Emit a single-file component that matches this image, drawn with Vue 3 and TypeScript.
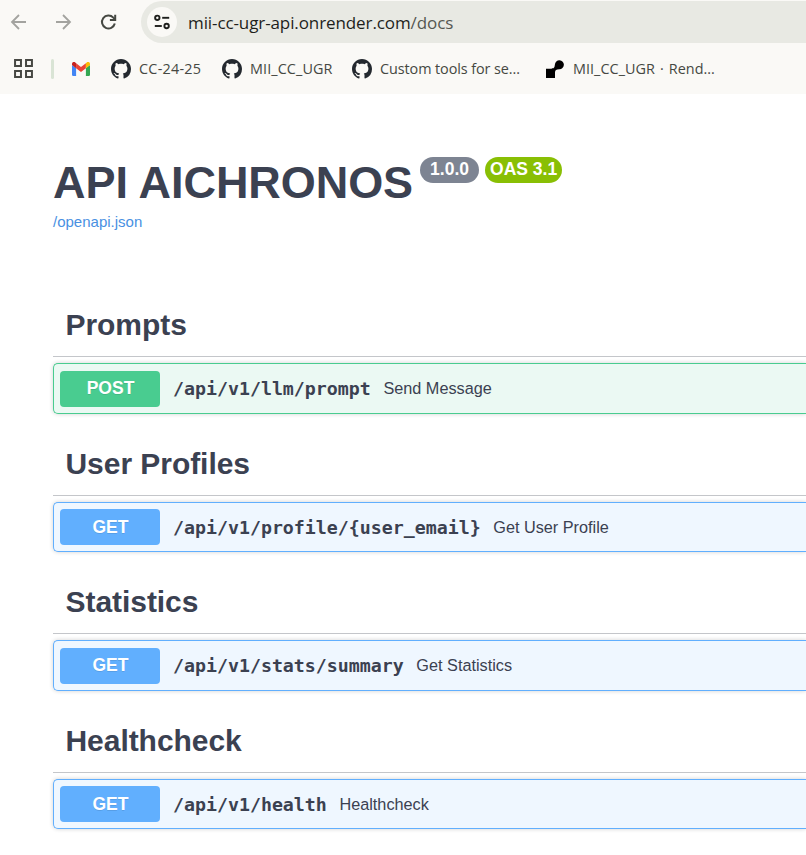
<script setup lang="ts">
interface Operation {
  tag: string
  method: 'POST' | 'GET'
  path: string
  summary: string
}

interface Bookmark {
  label: string
  icon: 'github' | 'render'
  key: string
}

const bookmarks: Bookmark[] = [
  { label: 'CC-24-25', icon: 'github', key: 'cc' },
  { label: 'MII_CC_UGR', icon: 'github', key: 'mii' },
  { label: 'Custom tools for se...', icon: 'github', key: 'tools' },
  { label: 'MII_CC_UGR · Rend...', icon: 'render', key: 'rend' },
]

const operations: Operation[] = [
  { tag: 'Prompts', method: 'POST', path: '/api/v1/llm/prompt', summary: 'Send Message' },
  { tag: 'User Profiles', method: 'GET', path: '/api/v1/profile/{user_email}', summary: 'Get User Profile' },
  { tag: 'Statistics', method: 'GET', path: '/api/v1/stats/summary', summary: 'Get Statistics' },
  { tag: 'Healthcheck', method: 'GET', path: '/api/v1/health', summary: 'Healthcheck' },
]
</script>

<template>
  <div class="window">
    <header class="chrome">
      <div class="toolbar">
        <nav class="nav">
          <svg class="nav-icon dim" viewBox="0 0 20 20"><path d="M17 10H3.200M10 3L3 10l7 7" /></svg>
          <svg class="nav-icon dim" viewBox="0 0 20 20"><path d="M2 10h13.800M9 3l7 7-7 7" /></svg>
          <svg class="nav-icon reload" viewBox="0 0 20 20">
            <path d="M15.800 11.500A6.500 6.500 0 1 1 14.300 5.600L16.200 7.500" />
            <path d="M16.200 2.700v5.300h-5.300" />
          </svg>
        </nav>
        <div class="address">
          <span class="site">
            <svg viewBox="0 0 18 18">
              <circle cx="4.3" cy="4.8" r="2.2" /><path d="M9.2 4.800h7" />
              <circle cx="13.6" cy="13" r="2.2" /><path d="M1.800 13h7" />
            </svg>
          </span>
          <span class="url">mii-cc-ugr-api.onrender.com<span class="url-path">/docs</span></span>
        </div>
      </div>
      <div class="bookmarks">
        <svg class="apps" viewBox="0 0 18 18">
          <path d="M1 1h5.6v5.6H1zM11.4 1H17v5.6h-5.6zM1 11.4h5.6V17H1zM11.4 11.4H17V17h-5.6z" />
        </svg>
        <span class="divider"></span>
        <svg class="gmail" viewBox="0 0 18 14">
          <path fill="#4285f4" d="M0 3l4.1 3v8H1.2A1.2 1.2 0 0 1 0 12.8z" />
          <path fill="#34a853" d="M18 3l-4.1 3v8h2.9a1.2 1.2 0 0 0 1.2-1.2z" />
          <path fill="#ea4335" d="M4.1 1.2L9 4.9l4.9-3.7v5L9 9.9 4.1 6.2z" />
          <path fill="#c5221f" d="M0 3V1.8C0 .2 1.7-.6 3 .3l1.1.9v5z" />
          <path fill="#fbbc04" d="M18 3V1.8c0-1.6-1.7-2.4-3-1.5l-1.1.9v5z" />
        </svg>
        <span v-for="b in bookmarks" :key="b.key" class="bookmark" :class="b.key">
          <svg v-if="b.icon === 'github'" class="github" viewBox="0 0 16 16">
            <path d="M8 0C3.58 0 0 3.58 0 8c0 3.54 2.29 6.53 5.47 7.59.4.07.55-.17.55-.38 0-.19-.01-.82-.01-1.49-2.01.37-2.53-.49-2.69-.94-.09-.23-.48-.94-.82-1.13-.28-.15-.68-.52-.01-.53.63-.01 1.08.58 1.23.82.72 1.21 1.87.87 2.33.66.07-.52.28-.87.51-1.07-1.78-.2-3.64-.89-3.64-3.95 0-.87.31-1.59.82-2.15-.08-.2-.36-1.02.08-2.12 0 0 .67-.21 2.2.82.64-.18 1.32-.27 2-.27s1.36.09 2 .27c1.53-1.04 2.2-.82 2.2-.82.44 1.1.16 1.92.08 2.12.51.56.82 1.27.82 2.15 0 3.07-1.87 3.75-3.65 3.95.29.25.54.73.54 1.48 0 1.07-.01 1.93-.01 2.2 0 .21.15.46.55.38A8.01 8.01 0 0 0 16 8c0-4.42-3.58-8-8-8z" />
          </svg>
          <svg v-else class="render" viewBox="0 0 18 18">
            <path d="M0 8.8h5.2C8.3 8.8 8.6 7 8.9 4.600A4.500 4.500 0 1 1 13.200 9.200C10.300 9.200 9 10 9 12.600V18H0z" />
          </svg>
          <span class="label">{{ b.label }}</span>
        </span>
      </div>
    </header>

    <main class="docs">
      <div class="info">
        <h1>API AICHRONOS</h1>
        <span class="pill version">1.0.0</span>
        <span class="pill oas">OAS 3.1</span>
      </div>
      <a class="spec">/openapi.json</a>

      <section v-for="op in operations" :key="op.tag" class="group">
        <h2>{{ op.tag }}</h2>
        <div class="operation" :class="op.method.toLowerCase()">
          <span class="method">{{ op.method }}</span>
          <code>{{ op.path }}</code>
          <span class="summary">{{ op.summary }}</span>
        </div>
      </section>
    </main>
  </div>
</template>

<style>
body {
  margin: 0;
  background: #fff;
}
</style>

<style scoped>
.window {
  height: 855px;
  overflow: hidden;
  color: #3b4151;
  font-family: "Liberation Sans", Arial, sans-serif;
}
.chrome {
  box-sizing: border-box;
  height: 94px;
  padding-top: 1px;
  background: #faf9f6;
  font-family: "Open Sans", "Segoe UI", sans-serif;
}
.toolbar {
  display: flex;
  height: 42px;
}
.nav {
  display: flex;
  align-items: center;
  gap: 25px;
  width: 132px;
  padding-left: 9px;
}
.nav-icon {
  flex: none;
  width: 20px;
  height: 20px;
  fill: none;
  stroke-width: 1.8;
}
.dim {
  stroke: #a3a39f;
}
.reload {
  stroke: #454842;
  stroke-width: 2;
}
.address {
  display: flex;
  flex: 1;
  align-items: center;
  gap: 11px;
  padding-left: 6px;
  border-radius: 21px 0 0 21px;
  background: #e8e9e3;
}
.site {
  display: flex;
  align-items: center;
  justify-content: center;
  width: 30px;
  height: 30px;
  border-radius: 50%;
  background: #faf9f6;
}
.site svg {
  width: 18px;
  height: 18px;
  fill: none;
  stroke: #1e1f1c;
  stroke-width: 1.9;
}
.url {
  padding-top: 2px;
  color: #1e1f1c;
  font-size: 17px;
  letter-spacing: -0.1px;
  line-height: 40px;
  white-space: nowrap;
}
.url-path {
  color: #555751;
}
.bookmarks {
  display: flex;
  align-items: center;
  height: 51px;
  color: #454842;
  font-size: 14.4px;
}
.apps {
  width: 19px;
  height: 19px;
  margin-left: 14px;
  fill: none;
  stroke: #474843;
  stroke-width: 1.9;
}
.divider {
  width: 3px;
  height: 20px;
  margin-left: 18px;
  border-radius: 2px;
  background: #d9e4d5;
}
.gmail {
  width: 18px;
  height: 14px;
  margin: 0 1px 0 18px;
}
.bookmark {
  display: flex;
  align-items: center;
  gap: 8px;
  margin-left: 20px;
  white-space: nowrap;
}
.label {
  flex: none;
}
.cc {
  width: 91px;
  letter-spacing: 0.25px;
}
.mii {
  width: 110px;
  letter-spacing: 0.1px;
}
.tools {
  width: 168px;
  letter-spacing: -0.08px;
}
.rend {
  gap: 9px;
  margin-left: 26px;
  letter-spacing: 0.04px;
  word-spacing: 1.2px;
}
.github {
  flex: none;
  width: 20px;
  height: 20px;
  fill: #24292f;
}
.render {
  flex: none;
  width: 18px;
  height: 18px;
  fill: #000;
}
.docs {
  padding: 62px 0 0 53px;
}
.info {
  display: flex;
  align-items: flex-start;
  height: 54px;
}
h1 {
  margin: 0 7px 0 0;
  font-size: 45px;
  font-weight: 700;
  letter-spacing: -0.06px;
  line-height: 54px;
  white-space: nowrap;
}
.pill {
  height: 26px;
  margin-top: 1px;
  border-radius: 13px;
  color: #fff;
  font-size: 17.5px;
  font-weight: 700;
  line-height: 25px;
  text-align: center;
}
.version {
  width: 59px;
  background: #7d8492;
}
.oas {
  width: 77px;
  margin-left: 6px;
  background: #89bf04;
}
.spec {
  display: block;
  height: 85px;
  color: #4990e2;
  font-size: 15px;
  line-height: 24px;
}
.group {
  height: 138.6px;
}
h2 {
  box-sizing: border-box;
  height: 62.2px;
  margin: 0 0 6px;
  padding-left: 12.5px;
  border-bottom: 1px solid #c4c6ca;
  font-size: 30px;
  font-weight: 700;
  letter-spacing: -0.05px;
  line-height: 59px;
}
.operation {
  box-sizing: border-box;
  display: flex;
  align-items: flex-start;
  height: 50.4px;
  padding: 6.4px 0 0 6px;
  border: 1px solid;
  border-right: 0;
  border-radius: 5px 0 0 5px;
  box-shadow: 0 0 4px rgba(0, 0, 0, 0.19);
  line-height: 35px;
  white-space: nowrap;
}
.post {
  border-color: #49cc90;
  background: #ebf9f3;
}
.get {
  border-color: #61affe;
  background: #eff7ff;
}
.method {
  box-sizing: border-box;
  width: 100px;
  height: 36px;
  padding: 0.4px 0 0 1px;
  border-radius: 4px;
  color: #fff;
  font-size: 17.5px;
  font-weight: 700;
  text-align: center;
  text-shadow: 0 1px 0 rgba(0, 0, 0, 0.1);
}
.post .method {
  background: #49cc90;
}
.get .method {
  background: #61affe;
}
code {
  margin: 0.4px 0 0 13px;
  font-family: "DejaVu Sans Mono", Consolas, monospace;
  font-size: 18.25px;
  font-weight: 700;
}
.summary {
  margin: 0.4px 0 0 12.6px;
  font-size: 16.25px;
}
</style>
